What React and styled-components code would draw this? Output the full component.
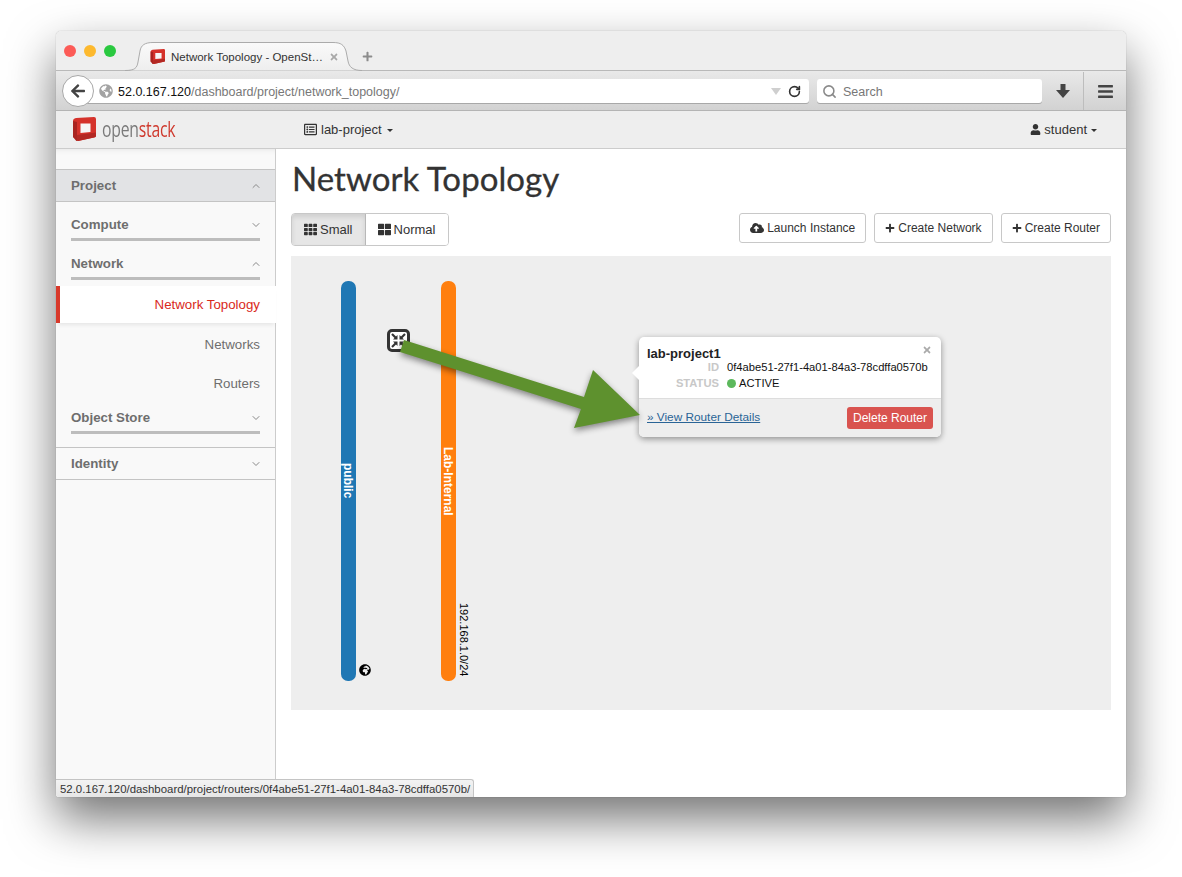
import React from "react";
import styled, { createGlobalStyle } from "styled-components";
import {
  FaArrowLeft,
  FaBars,
  FaCloudUploadAlt,
  FaGlobeAfrica,
  FaGlobeAmericas,
  FaPlus,
  FaRegListAlt,
  FaTh,
  FaThLarge,
  FaTimes,
  FaUser,
} from "react-icons/fa";
import { ChevronDown, ChevronUp, RotateCw, Search } from "lucide-react";

const GlobalStyle = createGlobalStyle`
  html, body {
    margin: 0;
    padding: 0;
    background: #fff;
  }
  body {
    font-family: "Liberation Sans", Arial, sans-serif;
    color: #333;
  }
  * {
    box-sizing: border-box;
  }
`;

function LogoMark({ size }) {
  return (
    <svg width={size} height={size} viewBox="0 0 24 24">
      <path d="M4 1 L22 0 Q24 0 24 2 V19 Q24 20 22 20.5 L6 24 Q4 24 4 22 L1 20 V4 Q1 1.5 4 1 Z" fill="#d5322b" />
      <path d="M1 4 L5 5 V24 Q4 24 3.5 23 L1 20 Z" fill="#a92420" />
      <path d="M5 18 L24 15.5 V19 Q24 20 22 20.5 L6 24 Q5 24 5 23 Z" fill="#b32823" />
      <path d="M8.5 6.5 H18.5 V15 L8.5 16 Z" fill="#f6f6f6" />
    </svg>
  );
}

function RouterGlyph() {
  return (
    <svg width="17" height="17" viewBox="0 0 17 17">
      <g stroke="#333" strokeWidth="2.2" fill="none">
        <path d="M2 2 L6 6" />
        <path d="M15 2 L11 6" />
        <path d="M2 15 L6 11" />
        <path d="M15 15 L11 11" />
      </g>
      <g fill="#333">
        <path d="M7.5 7.5 V3 L3 7.5 Z" />
        <path d="M9.5 7.5 V3 L14 7.5 Z" />
        <path d="M7.5 9.5 V14 L3 9.5 Z" />
        <path d="M9.5 9.5 V14 L14 9.5 Z" />
      </g>
    </svg>
  );
}

export default function App() {
  return (
    <Page>
      <GlobalStyle />
      <Window>
        <TitleBar>
          <Light color="#fc5b57" />
          <Light color="#fdb92e" />
          <Light color="#2ac940" />
          <Tab>
            <TabShape viewBox="0 0 237 29">
              <defs>
                <linearGradient id="tabfill" x1="0" y1="0" x2="0" y2="1">
                  <stop offset="0" stopColor="#fafafa" />
                  <stop offset="1" stopColor="#eeeeee" />
                </linearGradient>
              </defs>
              <path
                d="M0 28.5 C10 28.5 12 26 13 20 L15 9 C16 3 20 .5 28 .5 H208 C216 .5 219 3 221 9 L223 19 C224 25 228 28.5 237 28.5"
                fill="url(#tabfill)"
                stroke="#ababab"
              />
            </TabShape>
            <TabIcon>
              <LogoMark size={15} />
            </TabIcon>
            <TabTitle>Network Topology - OpenSt…</TabTitle>
            <TabClose>
              <FaTimes size={10} />
            </TabClose>
          </Tab>
          <NewTab>
            <FaPlus size={11} />
          </NewTab>
        </TitleBar>

        <Toolbar>
          <BackButton>
            <FaArrowLeft size={16} />
          </BackButton>
          <AddressBar>
            <FaGlobeAmericas size={14} color="#a3a3a3" />
            <Url>
              <b>52.0.167.120</b>/dashboard/project/network_topology/
            </Url>
            <UrlArrow />
            <RotateCw size={13} strokeWidth={3} color="#333" />
          </AddressBar>
          <SearchBar>
            <Search size={15} strokeWidth={2.5} color="#8a8a8a" />
            <span>Search</span>
          </SearchBar>
          <ToolButton>
            <svg width="14" height="14" viewBox="0 0 14 14">
              <polygon points="4.5,0 9.5,0 9.5,6 14,6 7,14 0,6 4.5,6" fill="#444" />
            </svg>
          </ToolButton>
          <MenuButton>
            <FaBars size={17} />
          </MenuButton>
        </Toolbar>

        <AppNav>
          <Brand>
            <LogoMark size={24} />
            <BrandText>
              open<em>stack</em>
            </BrandText>
          </Brand>
          <NavMenu>
            <FaRegListAlt size={13} />
            lab-project
            <Caret />
          </NavMenu>
          <UserMenu>
            <FaUser size={11} />
            student
            <Caret />
          </UserMenu>
        </AppNav>

        <Content>
          <Sidebar>
            <PanelHeader $open>
              Project
              <ChevronUp size={12} color="#888" />
            </PanelHeader>
            <GroupHeader>
              Compute
              <ChevronDown size={12} color="#888" />
            </GroupHeader>
            <GroupHeader>
              Network
              <ChevronUp size={12} color="#888" />
            </GroupHeader>
            <ActiveItem>Network Topology</ActiveItem>
            <NavItem>Networks</NavItem>
            <NavItem>Routers</NavItem>
            <GroupHeader $last>
              Object Store
              <ChevronDown size={12} color="#888" />
            </GroupHeader>
            <PanelHeader>
              Identity
              <ChevronDown size={12} color="#888" />
            </PanelHeader>
          </Sidebar>

          <Main>
            <PageTitle>Network Topology</PageTitle>
            <ActionsRow>
              <ButtonGroup>
                <GroupButton $active>
                  <FaTh size={13} />
                  Small
                </GroupButton>
                <GroupButton>
                  <FaThLarge size={13} />
                  Normal
                </GroupButton>
              </ButtonGroup>
              <Actions>
                <ActionButton>
                  <FaCloudUploadAlt size={14} />
                  Launch Instance
                </ActionButton>
                <ActionButton>
                  <FaPlus size={10} />
                  Create Network
                </ActionButton>
                <ActionButton>
                  <FaPlus size={10} />
                  Create Router
                </ActionButton>
              </Actions>
            </ActionsRow>

            <Topology>
              <NetworkBar $left={50} color="#1f77b4">
                <NetworkName $top={182}>public</NetworkName>
              </NetworkBar>
              <NetworkBar $left={150} color="#ff7f0e">
                <NetworkName $top={166}>Lab-Internal</NetworkName>
              </NetworkBar>
              <ExternalGlobe>
                <FaGlobeAfrica size={12} />
              </ExternalGlobe>
              <Cidr>192.168.1.0/24</Cidr>
              <RouterNode>
                <RouterGlyph />
              </RouterNode>

              <Popover>
                <PopoverClose>
                  <FaTimes size={10} />
                </PopoverClose>
                <PopoverBody>
                  <PopoverTitle>lab-project1</PopoverTitle>
                  <InfoRow>
                    <InfoLabel>ID</InfoLabel>
                    <span>0f4abe51-27f1-4a01-84a3-78cdffa0570b</span>
                  </InfoRow>
                  <InfoRow>
                    <InfoLabel>STATUS</InfoLabel>
                    <StatusDot />
                    <span>ACTIVE</span>
                  </InfoRow>
                </PopoverBody>
                <PopoverFooter>
                  <DetailsLink>» View Router Details</DetailsLink>
                  <DeleteButton>Delete Router</DeleteButton>
                </PopoverFooter>
              </Popover>

              <Callout viewBox="0 0 820 454">
                <polygon
                  points="113,84 293,141 302,114 349,159 283,172 290,153 109,96"
                  fill="#5e912e"
                />
              </Callout>
            </Topology>
          </Main>
        </Content>

        <StatusTip>52.0.167.120/dashboard/project/routers/0f4abe51-27f1-4a01-84a3-78cdffa0570b/</StatusTip>
      </Window>
    </Page>
  );
}

const Page = styled.div`
  width: 1182px;
  height: 877px;
  padding: 31px 0 0 56px;
  overflow: hidden;
`;

const Window = styled.div`
  position: relative;
  display: flex;
  flex-direction: column;
  width: 1070px;
  height: 766px;
  background: #fff;
  border-radius: 5px 5px 3px 3px;
  box-shadow: 0 0 1px rgba(0, 0, 0, 0.4), 0 22px 48px rgba(0, 0, 0, 0.55);
  overflow: hidden;
`;

const TitleBar = styled.div`
  display: flex;
  align-items: flex-end;
  flex: none;
  height: 40px;
  padding-left: 8px;
  gap: 8px;
  background: #eeeeee;
  border-bottom: 1px solid #b9b9b9;
`;

const Light = styled.span`
  width: 12px;
  height: 12px;
  align-self: flex-start;
  margin-top: 14px;
  border-radius: 50%;
  background: ${(props) => props.color};
`;

const Tab = styled.div`
  position: relative;
  display: flex;
  align-items: center;
  width: 237px;
  height: 29px;
  margin: 0 0 -1px 1px;
  padding-left: 25px;
`;

const TabShape = styled.svg`
  position: absolute;
  left: 0;
  top: 0;
  width: 237px;
  height: 29px;
`;

const TabIcon = styled.span`
  position: relative;
  display: flex;
`;

const TabTitle = styled.span`
  position: relative;
  margin-left: 6px;
  font-size: 11.5px;
  color: #333;
  white-space: nowrap;
`;

const TabClose = styled.span`
  position: relative;
  display: flex;
  margin-left: 6px;
  color: #a8a8a8;
`;

const NewTab = styled.span`
  display: flex;
  align-self: center;
  margin: 12px 0 0 -8px;
  color: #8c8c8c;
`;

const Toolbar = styled.div`
  display: flex;
  align-items: center;
  flex: none;
  height: 40px;
  padding: 1px 0 0 6px;
  background: linear-gradient(#e9e9e9, #d2d2d2);
  border-bottom: 1px solid #b4b4b4;
`;

const BackButton = styled.div`
  position: relative;
  z-index: 1;
  display: flex;
  align-items: center;
  justify-content: center;
  flex: none;
  width: 32px;
  height: 32px;
  margin-right: -16px;
  color: #444;
  background: #fff;
  border: 1px solid #a8a8a8;
  border-radius: 50%;
`;

const AddressBar = styled.div`
  display: flex;
  align-items: center;
  flex: 1;
  height: 24px;
  padding: 0 8px 0 21px;
  background: #fff;
  border-radius: 3px;
  box-shadow: 0 1px 0 #a8a8a8;
`;

const Url = styled.span`
  flex: 1;
  margin-left: 5px;
  padding-top: 1px;
  font-size: 12.5px;
  color: #777;
  white-space: nowrap;
  b {
    font-weight: normal;
    color: #111;
  }
`;

const UrlArrow = styled.span`
  width: 0;
  height: 0;
  margin-right: 7px;
  border-left: 5px solid transparent;
  border-right: 5px solid transparent;
  border-top: 7px solid #cfcfcf;
`;

const SearchBar = styled.div`
  display: flex;
  align-items: center;
  flex: none;
  gap: 6px;
  width: 225px;
  height: 24px;
  margin-left: 8px;
  padding: 1px 0 0 5px;
  font-size: 12.5px;
  color: #777;
  background: #fff;
  border-radius: 3px;
  box-shadow: 0 1px 0 #a8a8a8;
`;

const ToolButton = styled.div`
  display: flex;
  align-items: center;
  justify-content: center;
  flex: none;
  width: 41px;
  height: 100%;
  color: #444;
`;

const MenuButton = styled(ToolButton)`
  width: 43px;
  border-left: 1px solid #bdbdbd;
`;

const AppNav = styled.div`
  display: flex;
  align-items: center;
  flex: none;
  height: 38px;
  padding: 0 29px 0 16px;
  background: #eeeeee;
  border-bottom: 1px solid #cccccc;
  font-size: 13px;
  color: #333;
`;

const Brand = styled.div`
  display: flex;
  align-items: center;
  width: 232px;
  margin-top: -1px;
`;

const BrandText = styled.span`
  margin-left: 6px;
  font-family: "Open Sans", sans-serif;
  font-size: 21px;
  font-weight: 500;
  letter-spacing: -0.3px;
  color: #7a7a7a;
  display: inline-block;
  transform: scaleX(0.75);
  transform-origin: left center;
  em {
    font-style: normal;
    color: #cf3a2e;
  }
`;

const NavMenu = styled.div`
  display: flex;
  align-items: center;
  gap: 4px;
`;

const UserMenu = styled(NavMenu)`
  margin-left: auto;
  gap: 3px;
`;

const Caret = styled.span`
  width: 0;
  height: 0;
  margin-left: 1px;
  margin-top: 2px;
  border-left: 3.5px solid transparent;
  border-right: 3.5px solid transparent;
  border-top: 3.5px solid #333;
`;

const Content = styled.div`
  display: flex;
  flex: 1;
  min-height: 0;
`;

const Sidebar = styled.nav`
  flex: none;
  width: 220px;
  padding-top: 20px;
  background: #f9f9f9;
  border-right: 1px solid #cccccc;
  box-shadow: inset 0 6px 6px -6px rgba(0, 0, 0, 0.1);
`;

const PanelHeader = styled.div`
  display: flex;
  align-items: center;
  justify-content: space-between;
  height: 33px;
  padding: 0 13px 0 15px;
  font-size: 13.3px;
  font-weight: bold;
  color: #6e6e6e;
  background: ${(props) => (props.$open ? "#e2e3e5" : "transparent")};
  border-top: 1px solid #c4c4c4;
  border-bottom: 1px solid #c4c4c4;
`;

const GroupHeader = styled.div`
  display: flex;
  align-items: center;
  justify-content: space-between;
  height: 25px;
  margin: ${(props) => (props.$last ? "5px 15px 13px" : "14px 15px 0")};
  padding: 0 0 5px;
  font-size: 13.3px;
  font-weight: bold;
  color: #6e6e6e;
  border-bottom: 3px solid #bdbdbd;
  svg {
    margin-right: -2px;
  }
`;

const NavItem = styled.div`
  display: flex;
  align-items: center;
  justify-content: flex-end;
  height: 39px;
  padding: 0 15px 2px 0;
  font-size: 13.3px;
  color: #6e6e6e;
`;

const ActiveItem = styled(NavItem)`
  height: 37px;
  margin: 6px -1px 3px 0;
  color: #d9291c;
  background: #fff;
  border-left: 4px solid #d8392b;
  box-shadow: 0 4px 4px -2px rgba(0, 0, 0, 0.08);
  padding: 0 16px 0 0;
`;

const Main = styled.main`
  flex: 1;
  min-width: 0;
  padding: 0 15px;
`;

const PageTitle = styled.h1`
  margin: 7px 0 13px;
  padding-left: 1px;
  font-family: Lato, sans-serif;
  font-size: 33px;
  font-weight: normal;
  line-height: 44px;
  letter-spacing: 0.05px;
  color: #333;
  -webkit-text-stroke: 0.3px #333;
`;

const ActionsRow = styled.div`
  display: flex;
  align-items: flex-start;
  justify-content: space-between;
  height: 33px;
  margin-bottom: 10px;
`;

const ButtonGroup = styled.div`
  display: flex;
  height: 33px;
  border: 1px solid #c8c8c8;
  border-radius: 4px;
  overflow: hidden;
`;

const GroupButton = styled.div`
  display: flex;
  align-items: center;
  gap: 3px;
  padding: 0 ${(props) => (props.$active ? "12px" : "13px")} 0 12px;
  font-size: 13px;
  color: #333;
  background: ${(props) => (props.$active ? "#e6e6e6" : "#fff")};
  border-right: ${(props) => (props.$active ? "1px solid #b8b8b8" : "none")};
  box-shadow: ${(props) => (props.$active ? "inset 0 3px 5px rgba(0,0,0,.1)" : "none")};
`;

const Actions = styled.div`
  display: flex;
  gap: 8px;
`;

const ActionButton = styled.div`
  display: flex;
  align-items: center;
  gap: 3px;
  height: 30px;
  padding: 0 10px;
  font-size: 12px;
  color: #333;
  background: #fff;
  border: 1px solid #c8c8c8;
  border-radius: 3px;
`;

const Topology = styled.div`
  position: relative;
  height: 454px;
  background: #eeeeee;
`;

const NetworkBar = styled.div`
  position: absolute;
  left: ${(props) => props.$left}px;
  top: 25px;
  width: 15px;
  height: 400px;
  background: ${(props) => props.color};
  border-radius: 7px;
`;

const NetworkName = styled.span`
  position: absolute;
  top: ${(props) => props.$top}px;
  left: 0;
  width: 13px;
  writing-mode: vertical-rl;
  font-size: 12px;
  font-weight: bold;
  line-height: 13px;
  color: #fff;
  white-space: nowrap;
`;

const ExternalGlobe = styled.span`
  position: absolute;
  left: 68px;
  top: 408px;
  display: flex;
  color: #000;
`;

const Cidr = styled.span`
  position: absolute;
  left: 166px;
  top: 347px;
  writing-mode: vertical-rl;
  font-size: 11px;
  line-height: 13px;
  color: #000;
  white-space: nowrap;
`;

const RouterNode = styled.div`
  position: absolute;
  left: 96px;
  top: 73px;
  display: flex;
  align-items: center;
  justify-content: center;
  width: 23px;
  height: 23px;
  background: #fff;
  border: 3px solid #333;
  border-radius: 5px;
`;

const Popover = styled.div`
  position: absolute;
  left: 348px;
  top: 81px;
  display: flex;
  flex-direction: column;
  width: 302px;
  height: 100px;
  background: #fff;
  border-radius: 5px;
  box-shadow: 0 2px 6px rgba(0, 0, 0, 0.4);
  &::before {
    content: "";
    position: absolute;
    left: -7px;
    top: 29px;
    border-top: 7px solid transparent;
    border-bottom: 7px solid transparent;
    border-right: 7px solid #fff;
  }
`;

const PopoverClose = styled.span`
  position: absolute;
  right: 9px;
  top: 8px;
  display: flex;
  color: #aaa;
`;

const PopoverBody = styled.div`
  flex: none;
  height: 62px;
  padding: 9px 8px 0;
  font-size: 11.2px;
  color: #111;
  border-bottom: 1px solid #ddd;
`;

const PopoverTitle = styled.div`
  margin-bottom: -2px;
  font-size: 13px;
  font-weight: bold;
  line-height: 15px;
  color: #222;
`;

const InfoRow = styled.div`
  display: flex;
  align-items: center;
  height: 16px;
`;

const InfoLabel = styled.span`
  width: 72px;
  margin-right: 8px;
  font-weight: bold;
  text-align: right;
  color: #c8c8c8;
`;

const StatusDot = styled.span`
  width: 9px;
  height: 9px;
  margin-right: 3px;
  margin-top: 1px;
  background: #5cb85c;
  border-radius: 50%;
`;

const PopoverFooter = styled.div`
  display: flex;
  flex: 1;
  align-items: center;
  justify-content: space-between;
  padding: 0 8px;
  background: #eeeeee;
  border-radius: 0 0 5px 5px;
`;

const DetailsLink = styled.span`
  margin-top: -2px;
  font-size: 11.8px;
  color: #2a6496;
  text-decoration: underline;
`;

const DeleteButton = styled.div`
  display: flex;
  align-items: center;
  justify-content: center;
  width: 86px;
  height: 22px;
  font-size: 12px;
  color: #fff;
  background: #d9534f;
  border-radius: 3px;
`;

const Callout = styled.svg`
  position: absolute;
  left: 0;
  top: 0;
  width: 820px;
  height: 454px;
  overflow: visible;
  pointer-events: none;
  filter: drop-shadow(0 3px 3px rgba(0, 0, 0, 0.45));
`;

const StatusTip = styled.div`
  position: absolute;
  left: 0;
  bottom: 0;
  display: flex;
  align-items: center;
  height: 18px;
  padding: 0 3px 0 4px;
  font-size: 11.4px;
  color: #333;
  white-space: nowrap;
  background: linear-gradient(#f3f3f3, #e6e6e6);
  border-top: 1px solid #c4c4c4;
  border-right: 1px solid #c4c4c4;
  border-top-right-radius: 3px;
`;
